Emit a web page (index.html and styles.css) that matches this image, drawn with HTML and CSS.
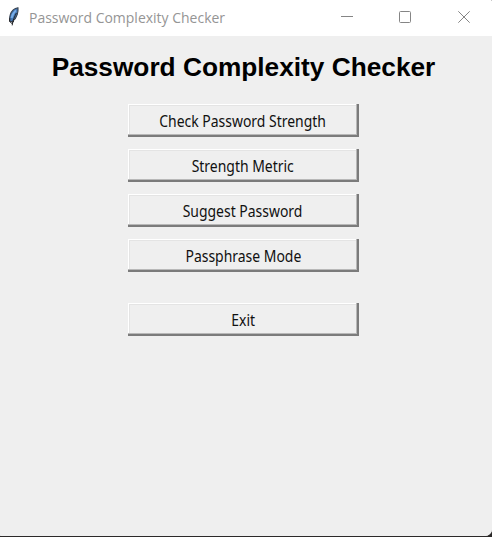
FILE: index.html
```html
<!DOCTYPE html>
<html lang="en">
<head>
<meta charset="utf-8">
<title>Password Complexity Checker</title>
<link rel="stylesheet" href="styles.css">
</head>
<body>
<div class="window">
  <header class="titlebar">
    <svg class="feather" width="14" height="22" viewBox="0 0 14 22">
      <path d="M11 1.8C7.6 2.2 4.4 5.2 3.2 8.8c-.8 2.5-.9 4.7-.2 6.6l2.2.2c2.5-1.9 4.4-4.4 5.1-7.2.5-2.2 1-4.5.7-6.6z" fill="#4377b5" stroke="#3a434f" stroke-width="1.1"/>
      <path d="M8.9 4.4C6.8 6.4 5.2 9 4.6 12" fill="none" stroke="#79aee8" stroke-width="2"/>
      <path d="M9.4 7C7.6 10.6 5.8 14 5.2 19.4M2.7 12.2l-.2 3.2 2.4 2 2-2.4" fill="none" stroke="#25272b" stroke-width="1"/>
    </svg>
    <span class="caption">Password Complexity Checker</span>
    <div class="controls">
      <svg width="12" height="12" viewBox="0 0 12 12"><path d="M0 5.5h12"/></svg>
      <svg width="12" height="12" viewBox="0 0 12 12"><rect x=".5" y=".5" width="11" height="11" rx="1"/></svg>
      <svg width="12" height="12" viewBox="0 0 12 12"><path d="M.3.3l11.4 11.4M11.7.3L.3 11.7"/></svg>
    </div>
  </header>
  <main class="content">
    <h1 class="heading">Password Complexity Checker</h1>
    <button class="btn"><span>Check Password Strength</span></button>
    <button class="btn"><span>Strength Metric</span></button>
    <button class="btn"><span>Suggest Password</span></button>
    <button class="btn"><span>Passphrase Mode</span></button>
    <button class="btn exit"><span>Exit</span></button>
  </main>
</div>
</body>
</html>
```
FILE: styles.css
```css
* { box-sizing: border-box; }
body { margin: 0; background: #2b2929; }
.window {
  height: 536px;
  display: flex;
  flex-direction: column;
  background: #fff;
  border-radius: 0 1px 7px 1px;
  overflow: hidden;
}
.titlebar {
  height: 36px;
  flex: none;
  display: flex;
  align-items: center;
  padding: 0 22px 3px 7px;
}
.feather { flex: none; }
.caption {
  width: 198px;
  margin-left: 8px;
  font: 400 15px/20px "Open Sans", sans-serif;
  color: #959595;
  white-space: nowrap;
  transform: scaleX(.932);
  transform-origin: left;
}
.controls { margin-left: auto; display: flex; gap: 46px; }
.controls svg { fill: none; stroke: #858585; stroke-width: 1; }
.controls svg:nth-child(2) { margin-right: 1px; }
.content {
  flex: 1;
  display: flex;
  flex-direction: column;
  align-items: center;
  padding: 15px 5px 0 0;
  background: #efefef;
}
.heading {
  margin: 0 0 21px;
  font: bold 26.25px/32px "Liberation Sans", Arial, sans-serif;
  white-space: nowrap;
  color: #000;
}
.btn {
  width: 231px;
  height: 33px;
  flex: none;
  margin: 0 0 12px;
  padding: 0 1px 0 0;
  border: 0;
  background: #efefef;
  box-shadow: inset -2px -2px #7b7b7b, inset -3px -3px #b8b8b8, inset 1px 1px #fff, inset 2px 2px #e4e4e4;
  color: #111;
  font: 15.5px/20px "Noto Sans", sans-serif;
}
.btn span { display: inline-block; transform: scaleX(.9); }
.exit { margin-top: 19px; }
```
